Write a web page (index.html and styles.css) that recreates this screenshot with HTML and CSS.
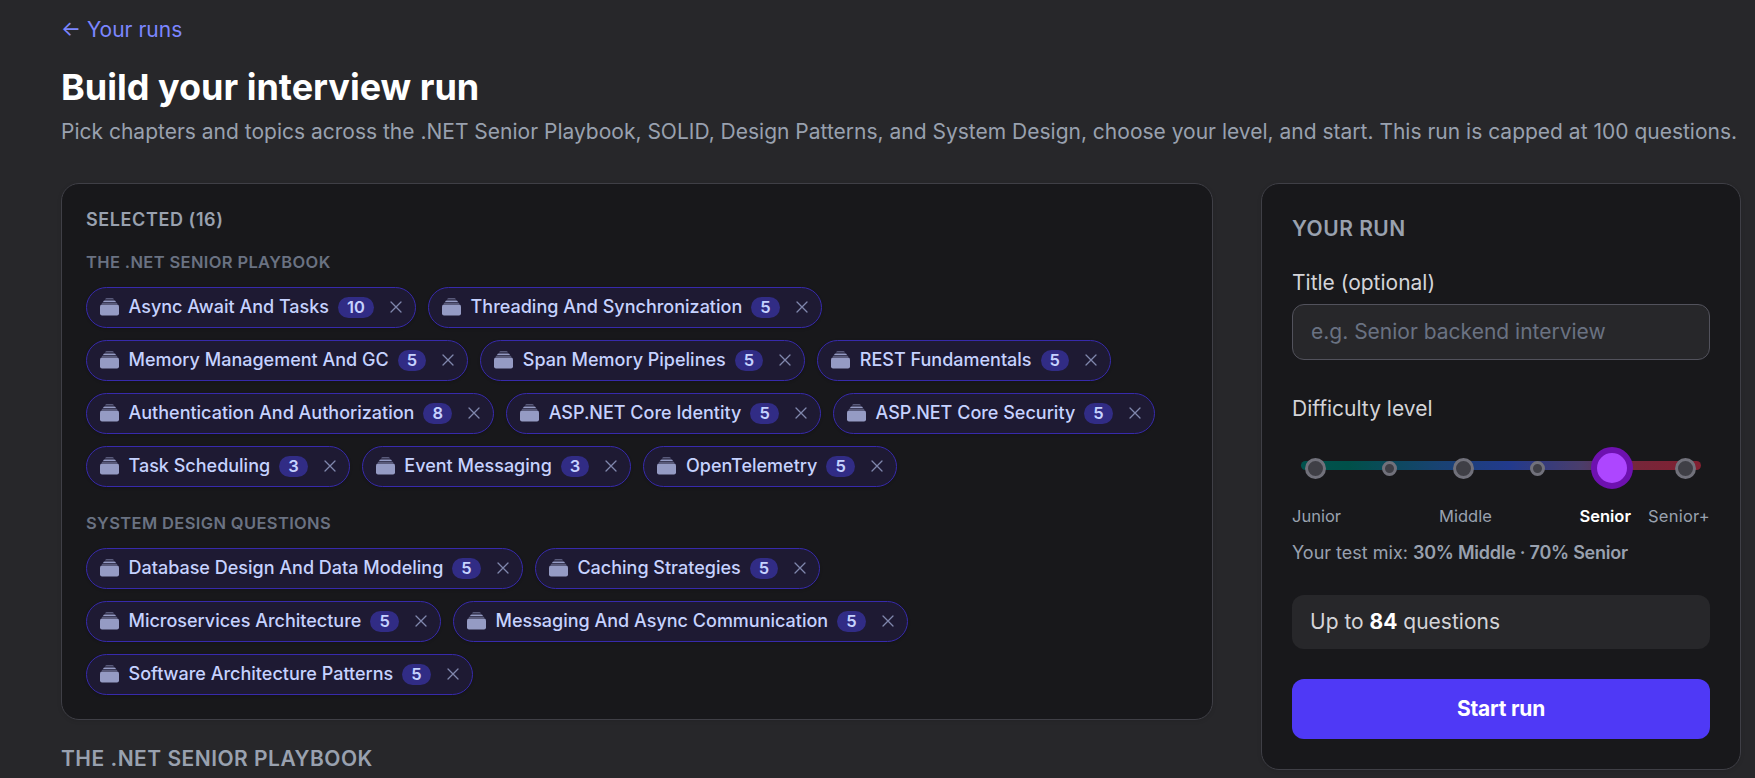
FILE: index.html
```html
<!DOCTYPE html>
<html lang="en">
<head>
    <meta charset="UTF-8">
    <meta name="viewport" content="width=device-width, initial-scale=1.0">
    <title>Build your interview run</title>
    <link rel="stylesheet" href="styles.css">
</head>
<body>
    <svg class="sprite" aria-hidden="true">
        <symbol id="stack" viewBox="0 0 19 18">
            <path d="M5 1.300Q5.400.5 6.500.5h6q1.100 0 1.500.8zM3 4Q3.600 2.600 5 2.600h9Q15.400 2.600 16 4z"/>
            <path d="M1.500 5.500Q2 4.800 3 4.800h13q1 0 1.500.7z"/>
            <rect x="0" y="6.500" width="19" height="11" rx="2"/>
        </symbol>
        <symbol id="close" viewBox="0 0 12 12">
            <path d="M1 1l10 10M11 1L1 11" fill="none" stroke="currentColor" stroke-width="1.3" stroke-linecap="round"/>
        </symbol>
    </svg>

    <div class="page">
        <a class="back" href="#">← Your runs</a>
        <h1>Build your interview run</h1>
        <p class="intro">Pick chapters and topics across the .NET Senior Playbook, SOLID, Design Patterns, and System Design, choose your level, and start. This run is capped at 100 questions.</p>

        <div class="layout">
            <main>
                <section class="card selected">
                    <h2>SELECTED (16)</h2>
                    <h3>THE .NET SENIOR PLAYBOOK</h3>
                    <div class="chips">
                        <span class="chip"><svg class="stack"><use href="#stack"/></svg>Async Await And Tasks<b>10</b><button><svg><use href="#close"/></svg></button></span>
                        <span class="chip"><svg class="stack"><use href="#stack"/></svg>Threading And Synchronization<b>5</b><button><svg><use href="#close"/></svg></button></span>
                        <span class="chip"><svg class="stack"><use href="#stack"/></svg>Memory Management And GC<b>5</b><button><svg><use href="#close"/></svg></button></span>
                        <span class="chip"><svg class="stack"><use href="#stack"/></svg>Span Memory Pipelines<b>5</b><button><svg><use href="#close"/></svg></button></span>
                        <span class="chip"><svg class="stack"><use href="#stack"/></svg>REST Fundamentals<b>5</b><button><svg><use href="#close"/></svg></button></span>
                        <span class="chip"><svg class="stack"><use href="#stack"/></svg>Authentication And Authorization<b>8</b><button><svg><use href="#close"/></svg></button></span>
                        <span class="chip"><svg class="stack"><use href="#stack"/></svg>ASP.NET Core Identity<b>5</b><button><svg><use href="#close"/></svg></button></span>
                        <span class="chip"><svg class="stack"><use href="#stack"/></svg>ASP.NET Core Security<b>5</b><button><svg><use href="#close"/></svg></button></span>
                        <span class="chip"><svg class="stack"><use href="#stack"/></svg>Task Scheduling<b>3</b><button><svg><use href="#close"/></svg></button></span>
                        <span class="chip"><svg class="stack"><use href="#stack"/></svg>Event Messaging<b>3</b><button><svg><use href="#close"/></svg></button></span>
                        <span class="chip"><svg class="stack"><use href="#stack"/></svg>OpenTelemetry<b>5</b><button><svg><use href="#close"/></svg></button></span>
                    </div>
                    <h3>SYSTEM DESIGN QUESTIONS</h3>
                    <div class="chips">
                        <span class="chip"><svg class="stack"><use href="#stack"/></svg>Database Design And Data Modeling<b>5</b><button><svg><use href="#close"/></svg></button></span>
                        <span class="chip"><svg class="stack"><use href="#stack"/></svg>Caching Strategies<b>5</b><button><svg><use href="#close"/></svg></button></span>
                        <span class="chip"><svg class="stack"><use href="#stack"/></svg>Microservices Architecture<b>5</b><button><svg><use href="#close"/></svg></button></span>
                        <span class="chip"><svg class="stack"><use href="#stack"/></svg>Messaging And Async Communication<b>5</b><button><svg><use href="#close"/></svg></button></span>
                        <span class="chip"><svg class="stack"><use href="#stack"/></svg>Software Architecture Patterns<b>5</b><button><svg><use href="#close"/></svg></button></span>
                    </div>
                </section>
                <h2 class="section-title">THE .NET SENIOR PLAYBOOK</h2>
            </main>

            <aside class="card run">
                <h2>YOUR RUN</h2>
                <label for="title">Title (optional)</label>
                <input type="text" id="title" placeholder="e.g. Senior backend interview">

                <div class="level-label">Difficulty level</div>
                <div class="slider">
                    <div class="track"></div>
                    <div class="stops">
                        <span class="stop"></span>
                        <span class="stop half"></span>
                        <span class="stop"></span>
                        <span class="stop half"></span>
                        <span class="stop active"></span>
                        <span class="stop"></span>
                    </div>
                </div>
                <div class="levels">
                    <span>Junior</span>
                    <span class="middle">Middle</span>
                    <span class="current">Senior</span>
                    <span class="last">Senior+</span>
                </div>
                <p class="mix">Your test mix: <b>30% Middle · 70% Senior</b></p>

                <div class="total">Up to <b>84</b> questions</div>
                <button class="start">Start run</button>
            </aside>
        </div>
    </div>
</body>
</html>
```
FILE: styles.css
```css
* {
    box-sizing: border-box;
}
body {
    margin: 0;
    height: 778px;
    overflow: hidden;
    background: #27272a;
    color: #d4d4d8;
    font-family: Inter, sans-serif;
    font-size: 21px;
    line-height: 30px;
}
h1, h2, h3, p {
    margin: 0;
}
button {
    border: 0;
    padding: 0;
    font: inherit;
    cursor: pointer;
}
.sprite {
    display: none;
}
.page {
    padding: 15px 14px 0 61px;
}
.back {
    display: block;
    color: #7c86ff;
    text-decoration: none;
}
h1 {
    margin-top: 18px;
    color: #fff;
    font-size: 36px;
    font-weight: 700;
    line-height: 48px;
}
.intro {
    margin: 6px 0 36px;
    color: #99a1af;
    white-space: nowrap;
}
.layout {
    display: grid;
    grid-template-columns: 1fr 480px;
    gap: 48px;
    align-items: start;
}
.card {
    background: #18181b;
    border: 1px solid #3f3f46;
    border-radius: 18px;
    box-shadow: 0 1px 4px rgba(0, 0, 0, 0.1);
}

/* selected topics */
.selected {
    padding: 24px;
}
.selected h2 {
    color: #99a1af;
    font-size: 18px;
    font-weight: 600;
    line-height: 24px;
    letter-spacing: 0.033em;
}
.selected h3 {
    margin: 18px 0 12px;
    color: #6a7282;
    font-size: 16.5px;
    font-weight: 600;
    line-height: 24.75px;
    letter-spacing: 0.022em;
}
.chips + h3 {
    margin-top: 24px;
}
.chips {
    display: flex;
    flex-wrap: wrap;
    gap: 12px;
    padding-right: 12px;
}
.chip {
    display: flex;
    align-items: center;
    height: 41px;
    padding: 0 13px;
    background: #1e1a33;
    border: 1px solid #372aac;
    border-radius: 21px;
    box-shadow: 0 1px 3px rgba(0, 0, 0, 0.15);
    color: #c6d2ff;
    font-size: 18px;
    font-weight: 500;
    line-height: 24px;
    white-space: nowrap;
}
.chip .stack {
    width: 19px;
    height: 18px;
    margin-right: 9.5px;
    fill: #959bc4;
}
.chip b {
    margin-left: 9px;
    padding: 0 9px;
    background: #312c85;
    border-radius: 11px;
    font-size: 16.5px;
    font-weight: 600;
    line-height: 21px;
}
.chip button {
    display: flex;
    margin-left: 16.2px;
    background: none;
    color: #8087ad;
}
.chip button svg {
    width: 12px;
    height: 12px;
}
.section-title {
    margin-top: 24px;
    color: #99a1af;
    font-size: 21px;
    font-weight: 600;
    letter-spacing: 0.023em;
}

/* run settings */
.run {
    display: flex;
    flex-direction: column;
    padding: 30px;
}
.run h2 {
    margin-bottom: 24px;
    color: #99a1af;
    font-size: 21px;
    font-weight: 600;
    letter-spacing: 0.023em;
}
.run input {
    height: 56px;
    margin-top: 6px;
    padding: 11px 18px 13px;
    background: #27272a;
    border: 1px solid #52525c;
    border-radius: 12px;
    color: #fff;
    font: inherit;
}
.run input::placeholder {
    color: #6a7282;
}
.level-label {
    margin-top: 34px;
}
.slider {
    display: grid;
    align-items: center;
    height: 42px;
    margin-top: 23px;
}
.track,
.stops {
    grid-area: 1 / 1;
}
.track {
    height: 9px;
    margin: 0 9px 6px;
    border-radius: 5px;
    background: linear-gradient(90deg, #00524d, #005049 12%, #194273 35%, #223a8d 52%, #4a3d6b 70%, #76263a 84%, #822030);
}
.stops {
    display: flex;
    justify-content: space-between;
    align-items: center;
    padding: 0 14px 0 13px;
}
.stop {
    width: 21px;
    height: 21px;
    background: #3f3f46;
    border: 3px solid #71717b;
    border-radius: 50%;
}
.stop.half {
    width: 15px;
    height: 15px;
    margin: 0 3px;
}
.stop.active {
    width: 42px;
    height: 42px;
    margin: 0 -10.5px;
    background: #ad46ff;
    border: 6px solid #6e11b0;
}
.levels {
    display: flex;
    margin-top: 15px;
    color: #99a1af;
    font-size: 16.5px;
    line-height: 25px;
}
.levels .middle {
    margin-left: 98px;
}
.levels .current {
    margin-left: auto;
    color: #fff;
    font-weight: 600;
}
.levels .last {
    margin-left: 17px;
    letter-spacing: 0.015em;
}
.mix {
    margin: 12px 0 30px;
    color: #99a1af;
    font-size: 18px;
    line-height: 24px;
}
.mix b {
    font-weight: 600;
    letter-spacing: -0.014em;
}
.total {
    padding: 12px 18px;
    background: #27272a;
    border-radius: 12px;
}
.total b {
    color: #fff;
    font-weight: 700;
}
.start {
    height: 60px;
    margin-top: 30px;
    background: #4f39f6;
    border-radius: 12px;
    color: #fff;
    font-weight: 700;
    letter-spacing: -0.01em;
}
```
